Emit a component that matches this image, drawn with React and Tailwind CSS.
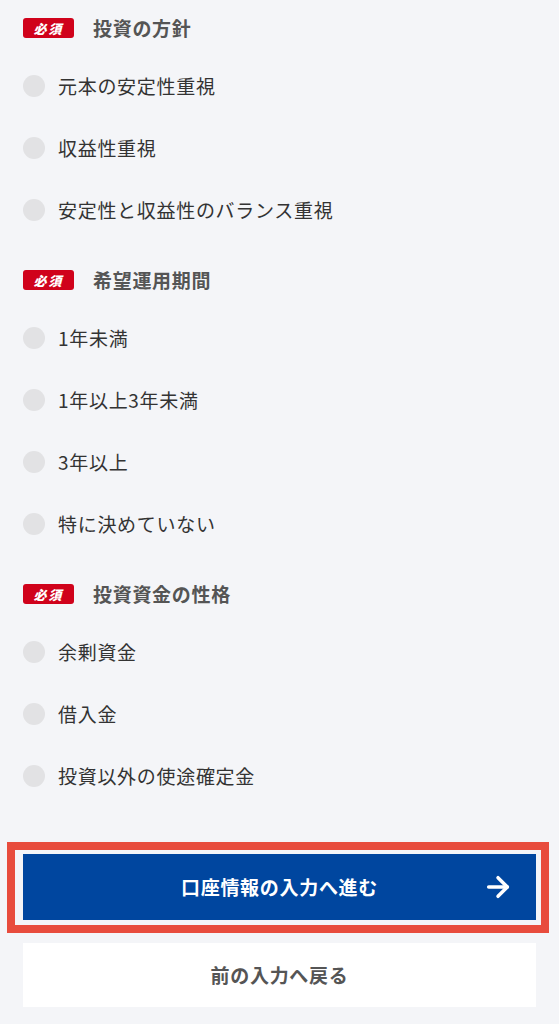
import { ArrowRight } from "lucide-react";

const sections = [
  {
    title: "投資の方針",
    options: ["元本の安定性重視", "収益性重視", "安定性と収益性のバランス重視"],
  },
  {
    title: "希望運用期間",
    options: ["1年未満", "1年以上3年未満", "3年以上", "特に決めていない"],
  },
  {
    title: "投資資金の性格",
    options: ["余剰資金", "借入金", "投資以外の使途確定金"],
  },
];

function RequiredBadge() {
  return (
    <span className="flex h-[20px] w-[51px] items-center justify-center rounded-[3px] bg-[#d0021b] text-[13px] font-black italic leading-none tracking-[2px] text-white">
      必須
    </span>
  );
}

function Section({ title, options }) {
  return (
    <div className="mb-[19px]">
      <div className="flex h-[40px] items-center gap-[19px]">
        <RequiredBadge />
        <h2 className="text-[19px] font-bold tracking-[0.7px] text-[#555]">{title}</h2>
      </div>
      <ul className="mt-[7px]">
        {options.map((opt) => (
          <li key={opt} className="flex h-[62px] items-center gap-[13px]">
            <span className="h-[22px] w-[22px] shrink-0 rounded-full bg-[#e2e2e4]" />
            <span className="text-[19px] tracking-[0.7px] text-[#333]">{opt}</span>
          </li>
        ))}
      </ul>
    </div>
  );
}

export default function App() {
  return (
    <div
      className="min-h-[1024px] bg-[#f4f5f8] px-[23px] pt-[8px]"
      style={{ fontFamily: '"Noto Sans CJK JP", "Noto Sans", sans-serif' }}
    >
      {sections.map((s) => (
        <Section key={s.title} {...s} />
      ))}

      <div className="mt-[47px] flex flex-col gap-[23px]">
        <div className="relative">
          {/* highlight frame around the primary button */}
          <div className="pointer-events-none absolute -bottom-[13px] -left-[16px] -right-[13px] -top-[12px] border-[8px] border-[#e84c3d]" />
          <button className="relative flex h-[66px] w-full items-center justify-center bg-[#00469f] text-[19px] font-bold tracking-[0.7px] text-white">
            口座情報の入力へ進む
            <ArrowRight className="absolute right-[22px] h-[32px] w-[32px]" strokeWidth={2.6} />
          </button>
        </div>
        <button className="flex h-[64px] w-full items-center justify-center bg-white text-[19px] font-bold tracking-[0.7px] text-[#555]">
          前の入力へ戻る
        </button>
      </div>
    </div>
  );
}
